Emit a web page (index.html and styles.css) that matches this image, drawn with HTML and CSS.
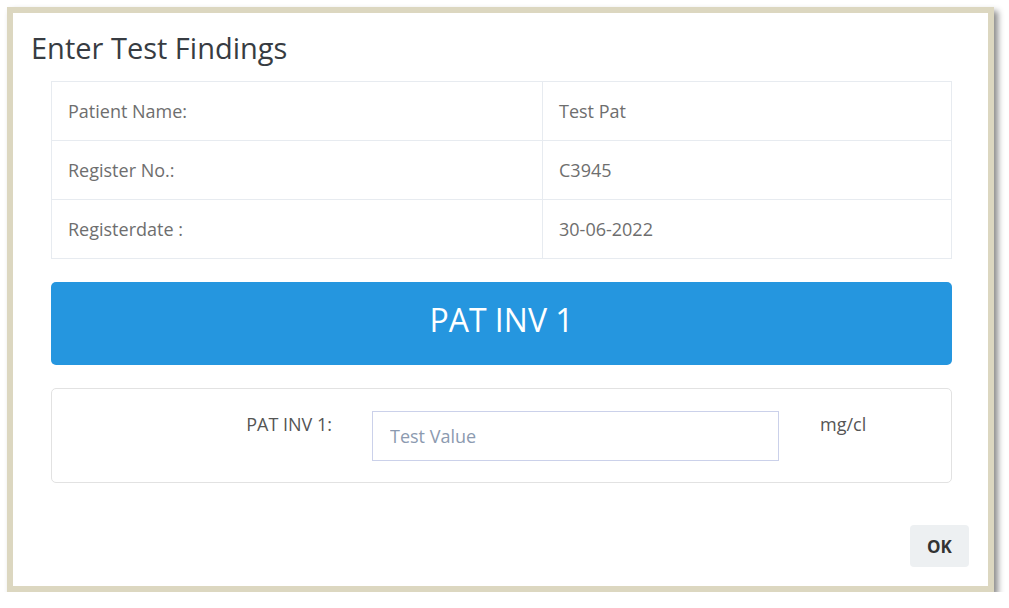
FILE: index.html
```html
<!DOCTYPE html>
<html lang="en">
<head>
  <meta charset="UTF-8">
  <meta name="viewport" content="width=device-width, initial-scale=1.0">
  <title>Enter Test Findings</title>
  <link rel="stylesheet" href="styles.css">
</head>
<body>
  <div class="dialog">
    <h1 class="dialog-title">Enter Test Findings</h1>

    <div class="dialog-body">
      <table class="info-table">
        <tr>
          <td class="info-key">Patient Name:</td>
          <td>Test Pat</td>
        </tr>
        <tr>
          <td class="info-key">Register No.:</td>
          <td>C3945</td>
        </tr>
        <tr>
          <td class="info-key">Registerdate :</td>
          <td>30-06-2022</td>
        </tr>
      </table>

      <div class="test-banner">PAT INV 1</div>

      <div class="result-card">
        <label class="result-label" for="testValue">PAT INV 1:</label>
        <input type="text" id="testValue" class="result-input" placeholder="Test Value">
        <span class="result-unit">mg/cl</span>
      </div>
    </div>

    <div class="dialog-footer">
      <button type="button" class="ok-button">OK</button>
    </div>
  </div>
</body>
</html>
```

FILE: styles.css
```css
body {
  font-family: "Open Sans", "Liberation Sans", Arial, sans-serif;
  margin: 0;
  padding: 0;
  background-color: #fff;
}

.dialog {
  box-sizing: border-box;
  width: 987px;
  height: 585px;
  margin: 7px 0 0 7px;
  border: 6px solid #dcd7c0;
  background-color: #fff;
  box-shadow: 4px 4px 6px rgba(0, 0, 0, 0.45);
  display: flex;
  flex-direction: column;
}

.dialog-title {
  margin: 0;
  padding: 17px 0 0 18px;
  font-size: 29px;
  font-weight: 400;
  line-height: 36px;
  color: #373c42;
}

.dialog-body {
  padding: 15px 36px 0 38px;
}

.info-table {
  width: 100%;
  border-collapse: collapse;
  font-size: 18px;
  color: #6e6e6e;
}

.info-table td {
  height: 58px;
  padding: 0 16px;
  border: 1px solid #e7ebf0;
}

.info-table .info-key {
  width: 458px;
}

.test-banner {
  box-sizing: border-box;
  margin-top: 23px;
  height: 83px;
  padding-bottom: 8px;
  border-radius: 5px;
  background-color: #2596df;
  color: #fff;
  font-size: 32px;
  display: flex;
  align-items: center;
  justify-content: center;
}

.result-card {
  margin-top: 23px;
  border: 1px solid #e2e2e2;
  border-radius: 5px;
  padding: 22px 0 21px 0;
  display: grid;
  grid-template-columns: 280px 407px auto;
  column-gap: 40px;
  align-items: start;
}

.result-label {
  text-align: right;
  font-size: 18px;
  color: #555;
  line-height: 26px;
}

.result-input {
  box-sizing: border-box;
  width: 407px;
  height: 50px;
  border: 1px solid #cbd1ea;
  padding: 0 17px;
  font-family: inherit;
  font-size: 18px;
  color: #555;
}

.result-input::placeholder {
  color: #8c9ab0;
}

.result-unit {
  font-size: 18px;
  color: #555;
  line-height: 26px;
  padding-left: 1px;
}

.dialog-footer {
  margin-top: auto;
  padding: 0 19px 19px 0;
  display: flex;
  justify-content: flex-end;
}

.ok-button {
  width: 59px;
  height: 42px;
  border: none;
  border-radius: 4px;
  background-color: #edf0f2;
  color: #333;
  font-family: inherit;
  font-size: 17px;
  font-weight: 700;
  cursor: pointer;
}
```
